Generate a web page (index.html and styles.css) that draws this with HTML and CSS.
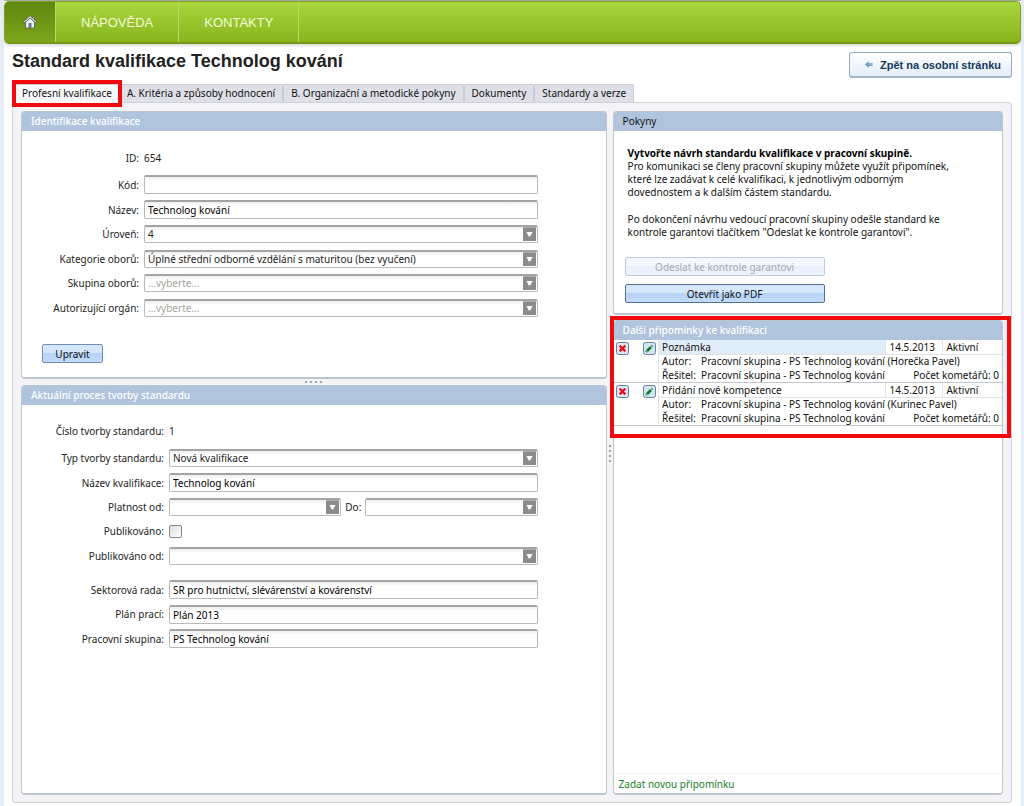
FILE: index.html
```html
<!DOCTYPE html>
<html lang="cs">
<head>
<meta charset="utf-8">
<title>Standard kvalifikace Technolog kování</title>
<link rel="stylesheet" href="styles.css">
</head>
<body>
<svg class="defs" width="0" height="0" aria-hidden="true">
  <symbol id="arrow" viewBox="0 0 13 14">
    <rect width="13" height="14" fill="#8b8b8b"/>
    <path d="M0 .5H13" stroke="#aaa"/>
    <path d="M3.500 5h6L7.200 9.500H5.800z" fill="#fff"/>
  </symbol>
  <symbol id="remove" viewBox="0 0 13 13">
    <rect x=".5" y=".5" width="12" height="12" rx="2" fill="#dde9f6" stroke="#667d96"/>
    <path d="M4.500 4.500l4 4M8.500 4.500l-4 4" stroke="#e8101c" stroke-width="2.400" stroke-linecap="square"/>
  </symbol>
  <symbol id="edit" viewBox="0 0 13 13">
    <rect x=".5" y=".5" width="12" height="12" rx="2" fill="#d3e6f3" stroke="#6b8298"/>
    <path d="M4 9l4-4" stroke="#107a2c" stroke-width="2.600"/>
    <path d="M8.800 4.200l.7-.7M3 10l.6-.6" stroke="#107a2c" stroke-width="2.200"/>
  </symbol>
</svg>
<div class="page">
  <header class="top">
    <nav class="menu" aria-label="Hlavní menu">
      <a class="menu-home" href="#" aria-label="Domů">
        <svg width="14" height="14" viewBox="0 0 14 14" aria-hidden="true">
          <path d="M10 1.500h1.500V5H10z" fill="#d9dfe0" stroke="#47551e" stroke-width=".6"/>
          <path d="M2.500 7L7 3l4.500 4v6h-9z" fill="#eef2ff" stroke="#4d5c3a" stroke-width=".8"/>
          <path d="M.8 7.600L7 1.800l6.200 5.800" fill="none" stroke="#4c5845" stroke-width="2.200"/>
          <path d="M1.200 7.200L7 1.800l5.800 5.400" fill="none" stroke="#e4e7e8" stroke-width="1.100"/>
          <path d="M5.500 8h3v5h-3z" fill="#6d768d"/>
        </svg>
      </a>
      <a class="menu-item" href="#">NÁPOVĚDA</a>
      <a class="menu-item" href="#">KONTAKTY</a>
    </nav>
  </header>
  <main class="content">
    <div class="heading">
      <h1>Standard kvalifikace Technolog kování</h1>
      <button class="back" type="button">
        <svg width="8" height="7" viewBox="0 0 8 7" aria-hidden="true"><path d="M0 3.500L3.800 0v2H7.500v3H3.800v2z" fill="#6b9cc7"/><path d="M3 3h4" stroke="#a7c8e4"/></svg>
        Zpět na osobní stránku
      </button>
    </div>
    <div class="tabs" role="tablist">
      <button class="tab tab-active" type="button" role="tab" aria-selected="true">Profesní kvalifikace</button>
      <button class="tab" type="button" role="tab">A. Kritéria a způsoby hodnocení</button>
      <button class="tab" type="button" role="tab">B. Organizační a metodické pokyny</button>
      <button class="tab" type="button" role="tab">Dokumenty</button>
      <button class="tab" type="button" role="tab">Standardy a verze</button>
    </div>
    <div class="workspace">
      <div class="column">
        <section class="panel">
          <h2>Identifikace kvalifikace</h2>
          <form class="form form-identity">
            <div class="row row-first"><span class="label">ID:</span><span>654</span></div>
            <div class="row row-text"><label for="kod">Kód:</label><input id="kod" type="text"></div>
            <div class="row row-text"><label for="nazev">Název:</label><input id="nazev" type="text" value="Technolog kování"></div>
            <div class="row"><label for="uroven">Úroveň:</label><span class="combo"><select id="uroven"><option>4</option></select><svg><use href="#arrow"/></svg></span></div>
            <div class="row row-text"><label for="kategorie">Kategorie oborů:</label><span class="combo"><select id="kategorie"><option>Úplné střední odborné vzdělání s maturitou (bez vyučení)</option></select><svg><use href="#arrow"/></svg></span></div>
            <div class="row"><label for="skupina">Skupina oborů:</label><span class="combo"><select id="skupina" class="empty"><option>...vyberte...</option></select><svg><use href="#arrow"/></svg></span></div>
            <div class="row row-text"><label for="organ">Autorizující orgán:</label><span class="combo"><select id="organ" class="empty"><option>...vyberte...</option></select><svg><use href="#arrow"/></svg></span></div>
            <button class="button button-edit" type="button">Upravit</button>
          </form>
        </section>
        <div class="grip grip-row" aria-hidden="true"><i></i><i></i><i></i><i></i></div>
        <section class="panel panel-grow">
          <h2>Aktuální proces tvorby standardu</h2>
          <form class="form form-process">
            <div class="row row-first"><span class="label">Číslo tvorby standardu:</span><span>1</span></div>
            <div class="row row-text"><label for="typ">Typ tvorby standardu:</label><span class="combo"><select id="typ"><option>Nová kvalifikace</option></select><svg><use href="#arrow"/></svg></span></div>
            <div class="row row-text"><label for="nazevkval">Název kvalifikace:</label><input id="nazevkval" type="text" value="Technolog kování"></div>
            <div class="row"><label for="od">Platnost od:</label>
              <div class="range">
                <span class="combo"><select id="od"><option></option></select><svg><use href="#arrow"/></svg></span>
                <label for="do">Do:</label>
                <span class="combo"><select id="do"><option></option></select><svg><use href="#arrow"/></svg></span>
              </div>
            </div>
            <div class="row"><label for="pub">Publikováno:</label><input id="pub" type="checkbox"></div>
            <div class="row row-text row-end"><label for="pubod">Publikováno od:</label><span class="combo"><select id="pubod"><option></option></select><svg><use href="#arrow"/></svg></span></div>
            <div class="row row-text"><label for="rada">Sektorová rada:</label><input id="rada" type="text" value="SR pro hutnictví, slévárenství a kovárenství"></div>
            <div class="row"><label for="plan">Plán prací:</label><input id="plan" type="text" value="Plán 2013"></div>
            <div class="row row-text"><label for="prac">Pracovní skupina:</label><input id="prac" type="text" value="PS Technolog kování"></div>
          </form>
        </section>
      </div>
      <div class="grip grip-column" aria-hidden="true"><i></i><i></i><i></i><i></i></div>
      <div class="column">
        <section class="panel panel-info">
          <h2 class="dark">Pokyny</h2>
          <div class="info">
            <p><strong>Vytvořte návrh standardu kvalifikace v pracovní skupině.</strong><br>Pro komunikaci se členy pracovní skupiny můžete využít připomínek,<br>které lze zadávat k celé kvalifikaci, k jednotlivým odborným<br>dovednostem a k dalším částem standardu.</p>
            <p>Po dokončení návrhu vedoucí pracovní skupiny odešle standard ke<br>kontrole garantovi tlačítkem "Odeslat ke kontrole garantovi".</p>
            <button class="button" type="button" disabled>Odeslat ke kontrole garantovi</button>
            <button class="button button-strong" type="button">Otevřít jako PDF</button>
          </div>
        </section>
        <section class="panel panel-grow panel-notes">
          <div class="marked">
            <h2>Další připomínky ke kvalifikaci</h2>
            <table class="notes">
              <colgroup><col class="c-icons"><col><col class="c-date"><col class="c-state"></colgroup>
              <tbody>
                <tr class="note-head">
                  <td rowspan="3" class="actions"><div><button type="button" aria-label="Smazat"><svg><use href="#remove"/></svg></button><button type="button" aria-label="Upravit"><svg><use href="#edit"/></svg></button></div></td>
                  <td class="selected">Poznámka</td><td>14.5.2013</td><td>Aktivní</td>
                </tr>
                <tr><td colspan="3"><div class="who"><span class="role">Autor:</span><span>Pracovní skupina - PS Technolog kování (Horečka Pavel)</span></div></td></tr>
                <tr class="note-end"><td colspan="3"><div class="who"><span class="role">Řešitel:</span><span>Pracovní skupina - PS Technolog kování</span><span class="count">Počet kometářů: 0</span></div></td></tr>
              </tbody>
              <tbody>
                <tr class="note-head">
                  <td rowspan="3" class="actions"><div><button type="button" aria-label="Smazat"><svg><use href="#remove"/></svg></button><button type="button" aria-label="Upravit"><svg><use href="#edit"/></svg></button></div></td>
                  <td>Přidání nové kompetence</td><td>14.5.2013</td><td>Aktivní</td>
                </tr>
                <tr><td colspan="3"><div class="who"><span class="role">Autor:</span><span>Pracovní skupina - PS Technolog kování (Kurinec Pavel)</span></div></td></tr>
                <tr class="note-end"><td colspan="3"><div class="who"><span class="role">Řešitel:</span><span>Pracovní skupina - PS Technolog kování</span><span class="count">Počet kometářů: 0</span></div></td></tr>
              </tbody>
            </table>
          </div>
          <div class="add"><a href="#">Zadat novou připomínku</a></div>
        </section>
      </div>
    </div>
  </main>
</div>
</body>
</html>
```
FILE: styles.css
```css
* { box-sizing: border-box; }
body {
  margin: 0;
  background: #e5edf6;
  color: #222;
  font: 10px/14px "Noto Sans", "DejaVu Sans", sans-serif;
}
button, input, select { font: inherit; color: inherit; margin: 0; }
h1, h2, p { margin: 0; }
.defs { position: absolute; }

.page {
  display: flex;
  flex-direction: column;
  min-height: 100vh;
  margin: 0 3px 0 4px;
  border-top: 1px solid #a3a99b;
  background: #fff;
}
.top {
  height: 43px;
  border: 1px solid #7da31f;
  border-bottom: 2px solid #729817;
  border-radius: 5px;
  background: linear-gradient(#a9d63d, #88b41d);
  box-shadow: 0 2px 3px #ddd;
}
.menu { display: flex; height: 100%; }
.menu a {
  display: flex;
  align-items: center;
  justify-content: center;
  border-right: 1px solid #b7d96c;
}
.menu .menu-home {
  width: 51px;
  border-radius: 4px 0 0 4px;
  background: linear-gradient(#5f870f, #7ba61a);
}
.menu .menu-item {
  padding: 2px 25px 0;
  color: #f3fbd9;
  font: 13px/16px "Liberation Sans", Arial, sans-serif;
  text-decoration: none;
}

.content { display: flex; flex: 1; flex-direction: column; padding: 8px 9px 3px 8px; }
.heading { display: flex; justify-content: space-between; height: 32px; }
.heading h1 {
  color: #222;
  font: bold 18px/18px "Liberation Sans", Arial, sans-serif;
}
.back {
  display: flex;
  align-items: center;
  gap: 7px;
  height: 26px;
  padding: 0 10px 0 15px;
  border: 1px solid #8fabc6;
  border-bottom: 2px solid #9fb4c8;
  border-radius: 3px;
  background: linear-gradient(#fff, #e3eef9);
  color: #123a5e;
  font: bold 11px/14px "Liberation Sans", Arial, sans-serif;
}

.tabs { display: flex; height: 18px; }
.tab {
  height: 18px;
  padding: 0 7px 1px;
  border: 1px solid #c9cad6;
  border-bottom: 0;
  border-radius: 2px 2px 0 0;
  background: #dfdfe8;
  color: #111;
  white-space: nowrap;
}
.tab-active {
  position: relative;
  height: 19px;
  padding: 0 6px 2px 9px;
  background: #f9f9fb;
}
.tab-active::after {
  content: "";
  position: absolute;
  inset: -5px -4px -4px -1px;
  border: 4px solid #f00a0e;
}

.workspace {
  display: grid;
  flex: 1;
  grid-template-columns: minmax(0, 3fr) 6px minmax(0, 2fr);
  padding: 8px 8px 7px;
  border: 1px solid #cfd1d6;
  border-radius: 0 3px 3px 3px;
  background: #f4f4f6;
}
.column { display: flex; flex-direction: column; }
.panel {
  border: 1px solid #bcc5d0;
  border-bottom-width: 2px;
  border-radius: 4px;
  background: #fff;
}
.panel-grow { display: flex; flex: 1; flex-direction: column; }
.panel h2 {
  height: 19px;
  padding: 0 9px;
  border-radius: 3px 3px 0 0;
  background: #b0c4de;
  color: #fff;
  font: 500 10px/18px "Noto Sans", "DejaVu Sans", sans-serif;
}
.panel h2.dark { color: #111; font-weight: normal; }
.grip { display: flex; align-items: center; justify-content: center; gap: 3px; }
.grip i { width: 2px; height: 2px; background: #a0a4aa; }
.grip-row { height: 6px; }
.grip-column { flex-direction: column; }

.form { padding: 0 68px 0 0; }
.row {
  display: grid;
  grid-template-columns: 117px minmax(0, 1fr);
  gap: 5px;
  align-items: center;
  height: 24px;
}
.form-process .row { grid-template-columns: 142px minmax(0, 1fr); }
.row > label, .row > .label { text-align: right; white-space: nowrap; }
.row-text { height: 25px; }
.row-first { height: 25px; margin: 14px 0 2px; }
.form-process .row-first { margin-top: 13px; }
.row-end { margin-bottom: 9px; }
input[type="text"], select {
  display: block;
  width: 100%;
  border: 1px solid #b9b9b9;
  border-top: 2px solid #a4a4a4;
  border-radius: 2px;
  outline: 0;
  background: linear-gradient(#eee, #fff 4px);
}
input[type="text"] { height: 19px; padding: 0 3px; color: #000; }
select { height: 18px; padding: 0 18px 1px 3px; appearance: none; }
select.empty { color: #a5a59b; }
.combo { position: relative; display: block; }
.combo svg {
  position: absolute;
  top: 2px;
  right: 2px;
  width: 13px;
  height: 14px;
  pointer-events: none;
}
.range {
  display: grid;
  grid-template-columns: 1fr auto 1fr;
  gap: 4px;
  align-items: center;
}
input[type="checkbox"] {
  width: 13px;
  height: 13px;
  border: 1px solid #888;
  border-radius: 2px;
  background: linear-gradient(135deg, #ddd, #fff);
  appearance: none;
}
.button {
  display: block;
  width: 100%;
  height: 19px;
  padding: 0;
  border: 1px solid #6f8eb2;
  border-radius: 2px;
  background: linear-gradient(#d6e7fb 0 45%, #b5d2f8 50%, #c3dbfb);
  color: #111;
}
.button-strong { border-color: #54708f; }
.button:disabled {
  border-color: #bccbdc;
  background: linear-gradient(#f5f9fe 0 45%, #e6f0fc 50%, #edf4fd);
  color: #a3abb5;
}
.button-edit { width: 61px; margin: 24px 0 14px 20px; }

.panel-info { margin-bottom: 5px; }
.info { width: 226px; padding: 16px 0 10px 14px; color: #111; }
.info p { margin-bottom: 14px; line-height: 13px; white-space: nowrap; }
.info .button { width: 200px; margin: 18px 0 0 -3px; }
.info .button-strong { margin-top: 8px; }
.info strong { color: #000; }

.marked { position: relative; }
.marked::after {
  content: "";
  position: absolute;
  inset: -5px -9px -12px -4px;
  border: 4px solid #f00a0e;
  pointer-events: none;
}
.notes { width: 100%; border-collapse: collapse; table-layout: fixed; color: #111; }
.notes .c-icons { width: 45px; }
.notes .c-date { width: 57px; }
.notes .c-state { width: 59px; }
.notes td { height: 14px; padding: 0 3px; line-height: 13px; white-space: nowrap; }
.notes .note-head td { padding-top: 1px; border: 1px solid #e0e3e7; border-top: 0; }
.notes .note-head td:last-child { border-right: 0; }
.note-end td { border-bottom: 1px solid #c4c8cc; }
.notes .selected { background: #e1ecf9; }
.notes .note-head .actions {
  padding: 2px;
  border-left: 0;
  border-bottom: 1px solid #c4c8cc;
  vertical-align: top;
}
.actions div { display: flex; justify-content: space-between; }
.actions button { display: block; padding: 0; border: 0; background: none; }
.actions svg { display: block; width: 13px; height: 13px; }
.who { display: flex; }
.role { flex: 0 0 39px; }
.count { margin-left: auto; }
.add {
  margin-top: auto;
  padding: 3px 5px 2px;
  border-top: 1px solid #f3f3f5;
}
.add a { color: #14811d; text-decoration: none; }
```
